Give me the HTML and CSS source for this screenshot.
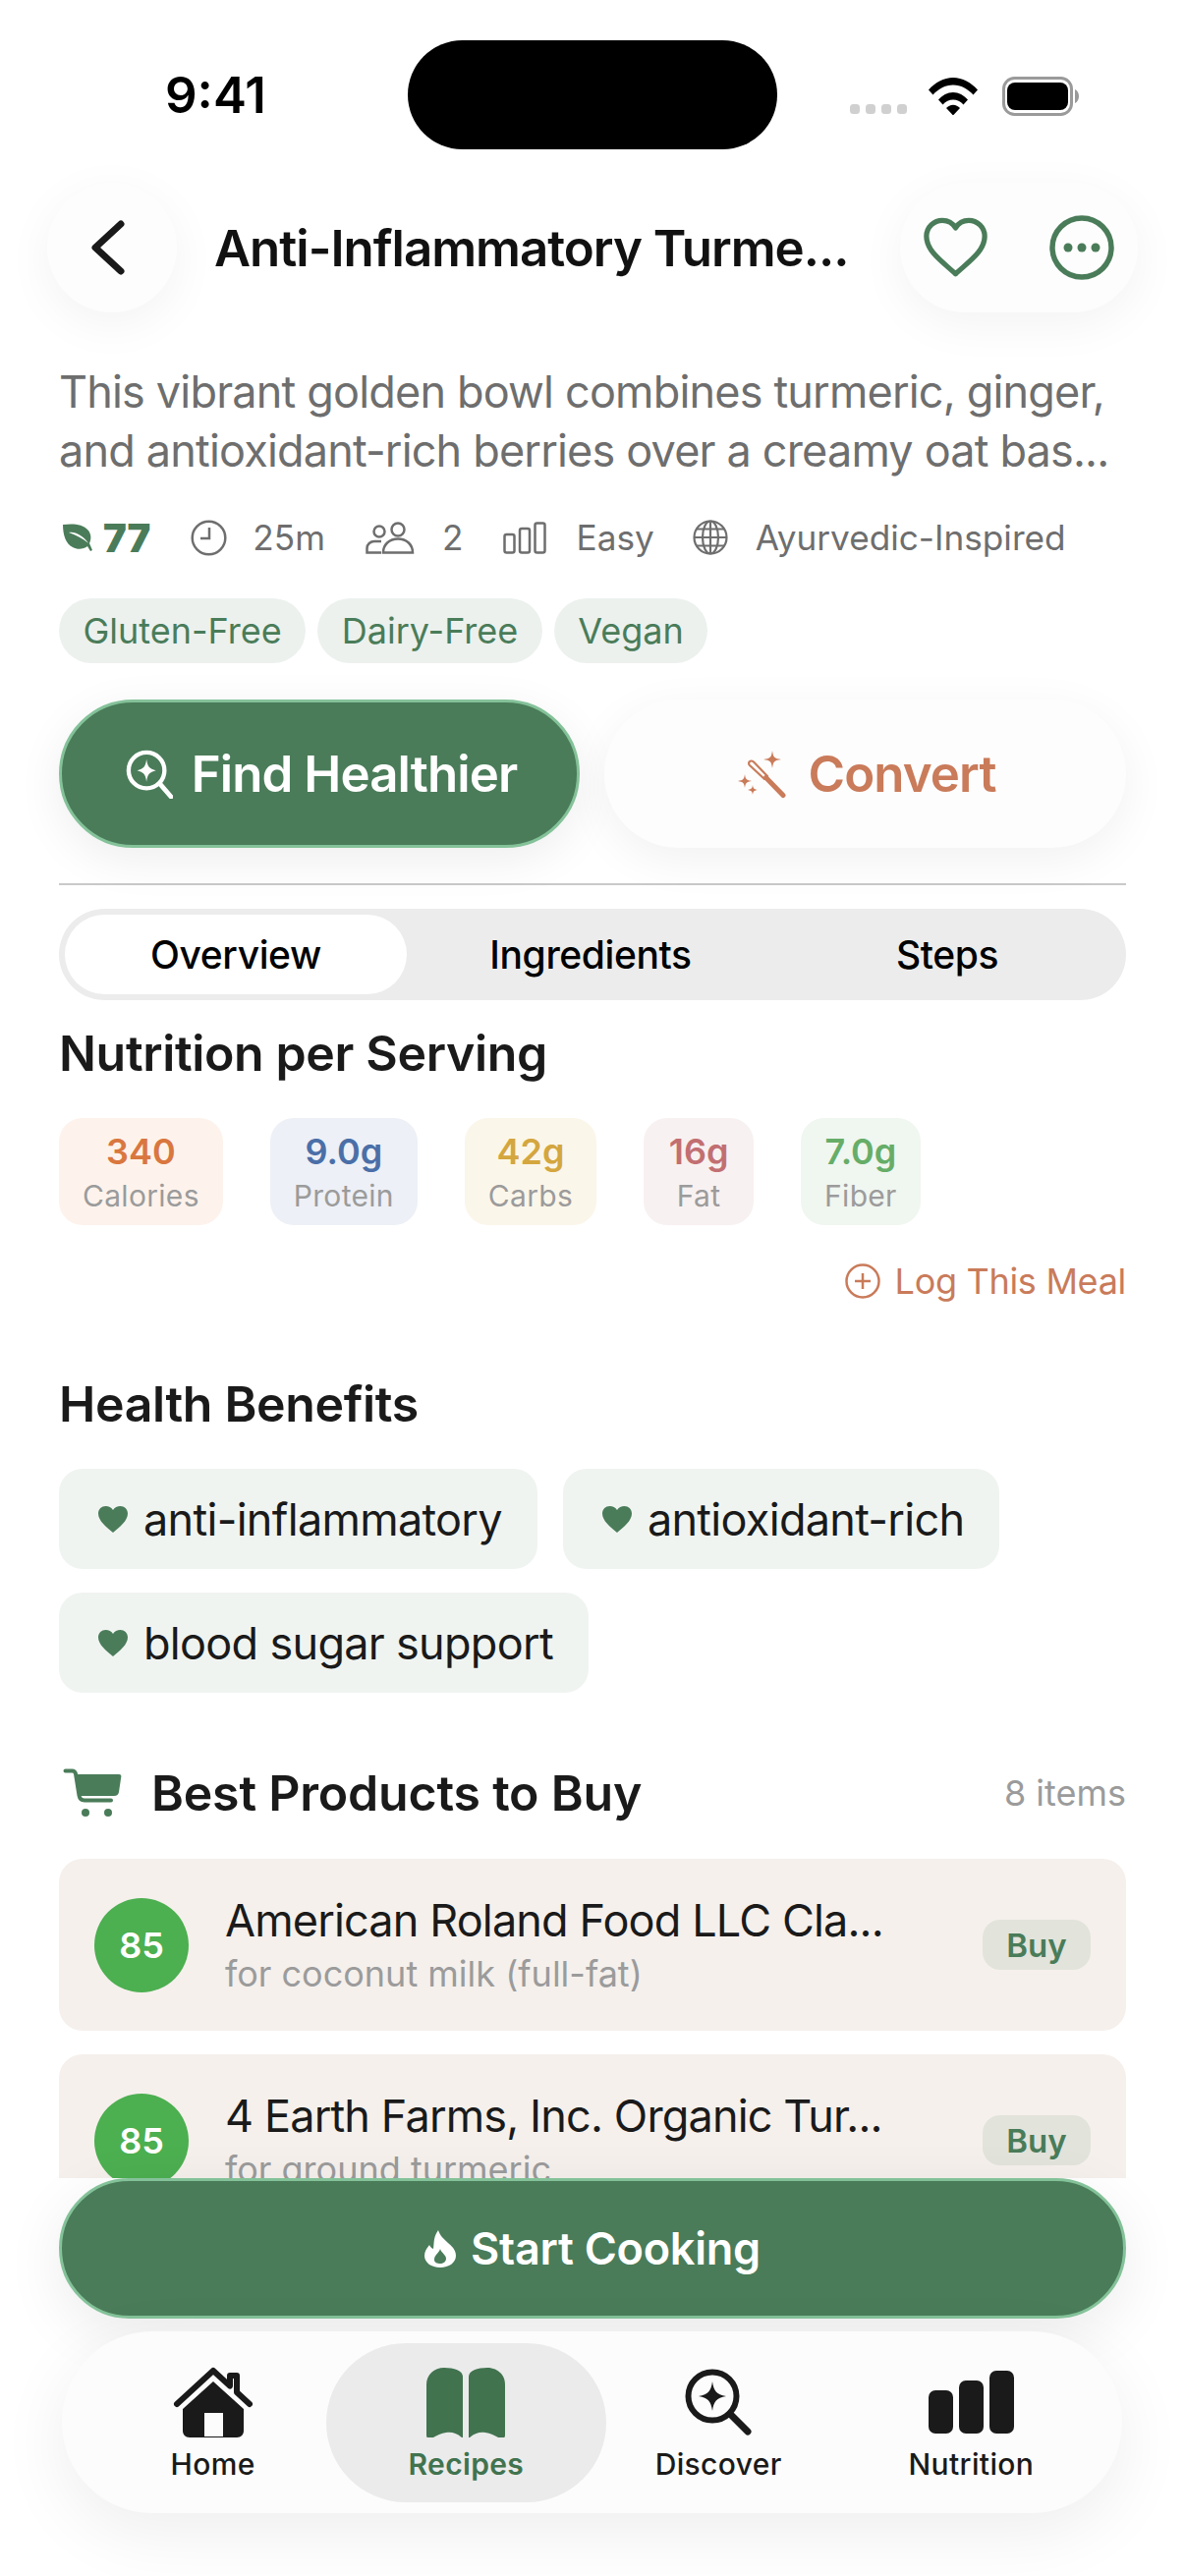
FILE: index.html
```html
<!DOCTYPE html>
<html lang="en">
<head>
<meta charset="utf-8">
<title>Recipe</title>
<link rel="stylesheet" href="styles.css">
</head>
<body>
<div class="screen">
  <div class="status">
    <span class="time">9:41</span>
    <div class="island"></div>
    <div class="status-icons">
      <svg class="signal" width="58" height="12" viewBox="0 0 58 12"><rect x="0" y="1" width="10" height="10" rx="3.5"/><rect x="16" y="1" width="10" height="10" rx="3.5"/><rect x="32" y="1" width="10" height="10" rx="3.5"/><rect x="48" y="1" width="10" height="10" rx="3.5"/></svg>
      <svg class="wifi" width="50" height="38" viewBox="0 0 50 38"><path d="M0 12.500C6.500 5 15.500 0 25 0s18.500 5 25 12.500l-4.500 5C40 11.500 33 7.500 25 7.500S10 11.500 4.500 17.500z"/><path d="M10 22.500C14 18 19.300 15 25 15s11 3 15 7.500l-4.500 5C32.500 24.300 29 22.500 25 22.500s-7.500 1.800-10.500 5z"/><path d="M18 31c1.800-2 4.300-3.300 7-3.300s5.200 1.300 7 3.300l-7 7.500z"/></svg>
      <svg class="battery" width="78" height="40" viewBox="0 0 78 40"><rect x="1.500" y="1.500" width="69" height="37" rx="11" fill="none" stroke="#9a9a9a" stroke-width="3"/><rect x="5" y="6" width="62" height="28" rx="8" fill="#000"/><path d="M74 13c2.500 1 4 4 4 7s-1.500 6-4 7z" fill="#9a9a9a"/></svg>
    </div>
  </div>

  <header class="topbar">
    <button class="circle-btn">
      <svg width="36" height="60" viewBox="0 0 36 60"><path d="M31 6 5 30l26 24" fill="none" stroke="#1a1a1a" stroke-width="7" stroke-linecap="round" stroke-linejoin="round"/></svg>
    </button>
    <h1 class="title">Anti-Inflammatory Turme...</h1>
    <div class="actions">
      <svg width="65" height="62" viewBox="0 0 68 64"><path d="M34 60C20 47 3 36 3 20 3 10 11 3 20 3c6 0 11 3 14 8 3-5 8-8 14-8 9 0 17 7 17 17 0 16-17 27-31 40z" fill="none" stroke="#4a7c59" stroke-width="5.500" stroke-linejoin="round"/></svg>
      <svg width="66" height="66" viewBox="0 0 66 66"><circle cx="33" cy="33" r="30" fill="none" stroke="#4a7c59" stroke-width="5.500"/><circle cx="19" cy="33" r="4.500" fill="#4a7c59"/><circle cx="33" cy="33" r="4.500" fill="#4a7c59"/><circle cx="47" cy="33" r="4.500" fill="#4a7c59"/></svg>
    </div>
  </header>

  <main class="scroll">
    <p class="desc">This vibrant golden bowl combines turmeric, ginger,<br>and antioxidant-rich berries over a creamy oat bas...</p>

    <div class="meta">
      <span class="score">
        <svg width="32" height="28" viewBox="0 0 32 28"><path d="M1 1c10-1 20-1 26 6 3 4 3 9 1 13l3 7-2 1-3-5c-4 3-10 4-15 1C4 21 1 11 1 1z" fill="#4a7c59"/><path d="M7 9c7-1 14 3 20 11-6-5-12-8-20-11z" fill="#fff"/></svg>
        <b>77</b>
      </span>
      <span class="meta-item m-time">
        <svg width="37" height="37" viewBox="0 0 37 37"><circle cx="18.500" cy="18.500" r="16.800" fill="none" stroke="#6e6e6e" stroke-width="2.500"/><path d="M19 8v11h-9" fill="none" stroke="#6e6e6e" stroke-width="2.500"/></svg>
        <span>25m</span>
      </span>
      <span class="meta-item m-people">
        <svg width="50" height="33" viewBox="0 0 50 33"><g fill="none" stroke="#6e6e6e" stroke-width="2.500"><circle cx="14" cy="10" r="5.500"/><circle cx="33" cy="8" r="6.500"/><path d="M16 20H9c-4 0-7.500 3-7.500 7v4.500H16"/><path d="M18 31.500h30c0-8-6-14-15-14s-15 6-15 14z"/></g></svg>
        <span>2</span>
      </span>
      <span class="meta-item m-diff">
        <svg width="44" height="33" viewBox="0 0 44 33"><g fill="none" stroke="#6e6e6e" stroke-width="2.500"><rect x="1.500" y="13" width="10" height="18.500" rx="2"/><rect x="17" y="7" width="10" height="24.500" rx="2"/><rect x="32.500" y="1.500" width="10" height="30" rx="2"/></g></svg>
        <span>Easy</span>
      </span>
      <span class="meta-item m-cuisine">
        <svg width="36" height="36" viewBox="0 0 36 36"><g fill="none" stroke="#6e6e6e" stroke-width="2.200"><circle cx="18" cy="18" r="16.500"/><ellipse cx="18" cy="18" rx="8" ry="16.500"/><path d="M18 1.500v33M1.500 18h33M4 9.500h28M4 26.500h28"/></g></svg>
        <span>Ayurvedic-Inspired</span>
      </span>
    </div>

    <div class="tags">
      <span class="tag">Gluten-Free</span>
      <span class="tag">Dairy-Free</span>
      <span class="tag">Vegan</span>
    </div>

    <div class="cta-row">
      <button class="cta cta-green">
        <svg width="48" height="50" viewBox="0 0 50 52"><circle cx="22" cy="22" r="19" fill="none" stroke="#fff" stroke-width="4.500"/><path d="M36 36l12 14" stroke="#fff" stroke-width="5" stroke-linecap="round"/><path d="M22 10c1 8 3 10 10 12-7 2-9 4-10 12-1-8-3-10-10-12 7-2 9-4 10-12z" fill="#fff"/></svg>
        Find Healthier
      </button>
      <button class="cta cta-white">
        <svg width="52" height="50" viewBox="0 0 52 50"><g fill="#c97b5a"><path d="M35 1c1 7 2 8 9 9-7 1-8 2-9 9-1-7-2-8-9-9 7-1 8-2 9-9z"/><path d="M7 25c.7 5 1.500 6 7 7-5.500 1-6.300 2-7 7-.7-5-1.500-6-7-7 5.500-1 6.300-2 7-7z"/><path d="M15 36c.5 3.500 1 4 5 5-4 1-4.500 1.500-5 5-.5-3.500-1-4-5-5 4-1 4.500-1.500 5-5z"/></g><path d="M11.500 12.500c1.500-1.500 3.500-1 4.500 0L30 27l-3 3-15-14c-1-1-1-2.500-.5-3.500z" fill="none" stroke="#c97b5a" stroke-width="2.200" stroke-linejoin="round"/><path d="M28.500 28.500 46 46.500" fill="none" stroke="#c97b5a" stroke-width="5" stroke-linecap="round"/></svg>
        Convert
      </button>
    </div>

    <hr class="divider">

    <nav class="tabs">
      <span class="tab tab-on">Overview</span>
      <span class="tab">Ingredients</span>
      <span class="tab">Steps</span>
    </nav>

    <h2 class="section-title">Nutrition per Serving</h2>
    <div class="facts">
      <div class="fact f-cal"><strong>340</strong><small>Calories</small></div>
      <div class="fact f-pro"><strong>9.0g</strong><small>Protein</small></div>
      <div class="fact f-car"><strong>42g</strong><small>Carbs</small></div>
      <div class="fact f-fat"><strong>16g</strong><small>Fat</small></div>
      <div class="fact f-fib"><strong>7.0g</strong><small>Fiber</small></div>
    </div>

    <div class="log">
      <svg width="36" height="36" viewBox="0 0 36 36"><circle cx="18" cy="18" r="16.500" fill="none" stroke="#c97b5a" stroke-width="2.500"/><path d="M18 10v16M10 18h16" stroke="#c97b5a" stroke-width="2.500"/></svg>
      <span>Log This Meal</span>
    </div>

    <h2 class="section-title benefits-title">Health Benefits</h2>
    <div class="benefits">
      <span class="benefit"><svg class="heart" width="30" height="27" viewBox="0 0 30 27"><path d="M15 27C8 21 0 15 0 7.500 0 3 3.500 0 7.500 0 10.500 0 13.500 1.500 15 4c1.500-2.500 4.500-4 7.500-4C26.500 0 30 3 30 7.500 30 15 22 21 15 27z"/></svg>anti-inflammatory</span>
      <span class="benefit"><svg class="heart" width="30" height="27" viewBox="0 0 30 27"><path d="M15 27C8 21 0 15 0 7.500 0 3 3.500 0 7.500 0 10.500 0 13.500 1.500 15 4c1.500-2.500 4.500-4 7.500-4C26.500 0 30 3 30 7.500 30 15 22 21 15 27z"/></svg>antioxidant-rich</span>
      <span class="benefit"><svg class="heart" width="30" height="27" viewBox="0 0 30 27"><path d="M15 27C8 21 0 15 0 7.500 0 3 3.500 0 7.500 0 10.500 0 13.500 1.500 15 4c1.500-2.500 4.500-4 7.500-4C26.500 0 30 3 30 7.500 30 15 22 21 15 27z"/></svg>blood sugar support</span>
    </div>

    <div class="products-head">
      <svg width="60" height="50" viewBox="0 0 60 50"><path d="M2.500 2.500h7c2 0 3 1 3.500 3l3.500 22c.5 3 2 5 5.500 5H49" fill="none" stroke="#4a7c59" stroke-width="4" stroke-linecap="round" stroke-linejoin="round"/><path d="M13 6h44c2 0 2.500 1 2.300 2.500L57 24c-.5 2.500-2 4-5 4H16z" fill="#4a7c59"/><circle cx="23" cy="45" r="4" fill="#4a7c59"/><circle cx="46" cy="45" r="4" fill="#4a7c59"/></svg>
      <h2 class="section-title products-title">Best Products to Buy</h2>
      <span class="count">8 items</span>
    </div>

    <div class="products">
      <div class="product">
        <span class="rating">85</span>
        <div class="product-info">
          <div class="product-name">American Roland Food LLC Cla...</div>
          <div class="product-for">for coconut milk (full-fat)</div>
        </div>
        <span class="buy">Buy</span>
      </div>
      <div class="product">
        <span class="rating">85</span>
        <div class="product-info">
          <div class="product-name">4 Earth Farms, Inc. Organic Tur...</div>
          <div class="product-for">for ground turmeric</div>
        </div>
        <span class="buy">Buy</span>
      </div>
    </div>
  </main>

  <div class="dock">
    <button class="start">
      <svg width="32" height="38" viewBox="0 0 32 38"><path fill-rule="evenodd" d="M14 0c2 6 5 8 10 13 5 4 8 8 8 13 0 7-7 12-16 12S0 33 0 26c0-5 3-8 5-11 1 2 2 3 4 4 1-7 0-12 5-19zM16 19c-1 4-6 6-6 11 0 3 3 4 6 4s6-2 6-5c0-4-5-6-6-10z" fill="#fff"/></svg>
      Start Cooking
    </button>
    <nav class="bottom-nav">
      <a class="nav-item">
        <svg class="nav-icon" width="82" height="72" viewBox="0 0 82 72"><path d="M4 38 41 4l17 15.600V9h7v17l13 12" fill="none" stroke="#1a1a1a" stroke-width="6" stroke-linecap="round" stroke-linejoin="round"/><path fill-rule="evenodd" d="M41 15 72 43v22c0 4-2.500 7-7 7H17c-4.500 0-7-3-7-7V43zM32 47v24h19V47z" fill="#1a1a1a"/></svg>
        <span class="nav-label">Home</span>
      </a>
      <a class="nav-item nav-on">
        <svg class="nav-icon" width="80" height="72" viewBox="0 0 80 72"><path d="M37 10v63c-6-6-12-7-17-6-6 1-11 4-15 6-3 1-5-1-5-3V18C0 8 8 1 18 1s19 3 19 9z" fill="#41734f"/><path d="M43 10v63c6-6 12-7 17-6 6 1 11 4 15 6 3 1 5-1 5-3V18C80 8 72 1 62 1S43 4 43 10z" fill="#41734f"/></svg>
        <span class="nav-label">Recipes</span>
      </a>
      <a class="nav-item">
        <svg class="nav-icon" width="68" height="68" viewBox="0 0 68 68"><circle cx="28" cy="28" r="24.500" fill="none" stroke="#1a1a1a" stroke-width="6"/><path d="M46 46l18 18" stroke="#1a1a1a" stroke-width="7" stroke-linecap="round"/><path d="M28 13c1.500 10 4 13 14 15-10 2-12.500 5-14 15-1.500-10-4-13-14-15 10-2 12.500-5 14-15z" fill="#1a1a1a"/></svg>
        <span class="nav-label">Discover</span>
      </a>
      <a class="nav-item">
        <svg class="nav-icon" width="87" height="64" viewBox="0 0 87 64"><g fill="#1a1a1a"><rect x="0" y="20" width="25" height="44" rx="7"/><rect x="31" y="10" width="25" height="54" rx="7"/><rect x="62" y="0" width="25" height="64" rx="7"/></g></svg>
        <span class="nav-label">Nutrition</span>
      </a>
    </nav>
  </div>
</div>
</body>
</html>
```

FILE: styles.css
```css
* { box-sizing: border-box; margin: 0; padding: 0; }
html, body { width: 1206px; height: 2622px; background: #fff; overflow: hidden; }
body { font-family: Inter, "Liberation Sans", sans-serif; color: #1a1a1a; }
button { font-family: inherit; border: 0; background: none; }

.screen { position: relative; width: 1206px; height: 2622px; overflow: hidden; display: flex; flex-direction: column; background: #fff; }

.status { height: 186px; flex: none; display: flex; align-items: flex-start; position: relative; }
.time { position: absolute; left: 168px; top: 67px; font-size: 51px; line-height: 60px; font-weight: 600; color: #000; }
.island { position: absolute; left: 415px; top: 41px; width: 376px; height: 111px; border-radius: 56px; background: #000; }
.status-icons { position: absolute; left: 865px; top: 78px; display: flex; align-items: flex-start; }
.signal { fill: #d0d0d0; margin-top: 27px; }
.wifi { fill: #000; margin-left: 22px; margin-top: 1px; }
.battery { margin-left: 25px; }

.topbar { height: 132px; flex: none; display: flex; align-items: center; padding: 0 48px; }
.circle-btn { width: 132px; height: 132px; border-radius: 66px; background: #fdfdfd; box-shadow: 0 12px 48px rgba(0,0,0,.05); display: flex; align-items: center; justify-content: center; padding-right: 8px; flex: none; }
.title { margin: 2px 0 0 38px; font-size: 51px; line-height: 60px; font-weight: 600; letter-spacing: -1px; color: #111; white-space: nowrap; flex: 1; }
.actions { width: 242px; height: 132px; border-radius: 66px; background: #fdfdfd; box-shadow: 0 12px 48px rgba(0,0,0,.05); display: flex; align-items: center; justify-content: space-between; padding: 0 24px 0 24px; flex: none; }

.scroll { height: 1899px; flex: none; overflow: hidden; padding: 0 60px; }

.desc { margin-top: 51px; font-size: 45px; line-height: 60px; letter-spacing: -0.82px; color: #6e6e6e; white-space: nowrap; }

.meta { margin-top: 40px; height: 36px; display: flex; align-items: center; color: #6e6e6e; font-size: 35.200px; white-space: nowrap; }
.meta-item { display: flex; align-items: center; }
.score { display: flex; align-items: center; gap: 10px; margin-left: 3px; color: #4a7c59; font-size: 40px; font-weight: 700; }
.m-time { margin-left: 41px; gap: 26px; }
.m-people { margin-left: 41px; gap: 28px; }
.m-diff { margin-left: 40px; gap: 31px; }
.m-cuisine { margin-left: 39px; gap: 28px; }

.tags { margin-top: 44px; display: flex; gap: 12px; }
.tag { height: 66px; padding: 0 24.500px; border-radius: 33px; background: #ecf1ee; color: #4a7c59; font-size: 36px; line-height: 66px; }

.cta-row { margin-top: 37px; display: flex; justify-content: space-between; }
.cta { height: 151px; width: 530px; padding-left: 4px; border-radius: 76px; font-size: 51px; font-weight: 600; letter-spacing: -0.9px; display: flex; align-items: center; justify-content: center; gap: 19px; }
.cta-green { background: #4a7c59; color: #fff; border: 3px solid #84c299; box-shadow: 0 12px 48px rgba(0,0,0,.07); }
.cta-white { width: 531px; background: #fdfdfd; color: #c97b5a; box-shadow: 0 12px 48px rgba(0,0,0,.06); }

.divider { margin-top: 36px; border: 0; height: 2px; background: #c9c9c9; }

.tabs { margin-top: 24px; height: 93px; border-radius: 47px; background: #ececec; padding: 6px; display: grid; grid-template-columns: 348px 374px 1fr; }
.tab { display: flex; align-items: center; justify-content: center; font-size: 39px; font-weight: 500; letter-spacing: -0.4px; color: #000; border-radius: 41px; }
.tab-on { background: #fff; }

.section-title { margin-top: 24px; font-size: 50px; line-height: 60px; font-weight: 600; letter-spacing: -0.35px; color: #1a1a1a; }

.facts { margin-top: 36px; display: flex; }
.fact { height: 109px; border-radius: 24px; display: flex; flex-direction: column; align-items: center; padding: 12px 24px 0; margin-right: 48px; }
.fact strong { font-size: 36px; line-height: 44px; font-weight: 600; }
.fact small { margin-top: 4px; font-size: 30px; line-height: 38px; letter-spacing: .3px; color: #9b9b9b; }
.f-cal { background: #fdf3ec; } .f-cal strong { color: #d9773f; }
.f-pro { background: #edf0f6; } .f-pro strong { color: #4a6fa8; }
.f-car { background: #fbf6ea; } .f-car strong { color: #d4a63f; }
.f-fat { background: #f8f1f1; min-width: 112px; } .f-fat strong { color: #c26f72; }
.f-fib { background: #f0f6f0; } .f-fib strong { color: #66ad68; }

.log { margin-top: 37px; height: 40px; display: flex; align-items: center; justify-content: flex-end; gap: 15px; color: #c97b5a; font-size: 36px; letter-spacing: -0.3px; }

.benefits-title { margin-top: 75px; }
.benefits { margin-top: 36px; display: flex; flex-wrap: wrap; gap: 24px 26px; }
.benefit { height: 102px; padding: 0 36px 0 40px; border-radius: 24px; background: #f0f4f1; display: flex; align-items: center; gap: 16px; font-size: 45px; letter-spacing: -0.7px; color: #1a1a1a; }
.heart { fill: #4a7c59; }

.products-head { margin-top: 72px; height: 60px; display: flex; align-items: center; }
.products-head svg { margin-left: 4px; }
.products-title { margin: 0 0 0 30px; flex: 1; letter-spacing: -0.2px; }
.count { font-size: 36px; color: #9b9b9b; }

.products { margin-top: 37px; display: flex; flex-direction: column; gap: 24px; }
.product { height: 175px; flex: none; border-radius: 24px; background: #f5f0ec; display: flex; align-items: center; padding: 0 36px; }
.rating { width: 96px; height: 96px; border-radius: 50%; background: #4caf50; color: #fff; font-size: 36px; font-weight: 600; display: flex; align-items: center; justify-content: center; flex: none; }
.product-info { margin-left: 37px; flex: 1; }
.product-name { font-size: 45px; line-height: 54px; letter-spacing: -0.85px; color: #1a1a1a; white-space: nowrap; }
.product-for { margin-top: 5px; font-size: 36px; line-height: 44px; color: #9b9b9b; white-space: nowrap; }
.buy { width: 110px; height: 51px; border-radius: 18px; background: #e2e3db; color: #4a7c59; font-size: 33px; font-weight: 600; display: flex; align-items: center; justify-content: center; flex: none; }

.dock { position: absolute; left: 0; right: 0; top: 2217px; height: 405px; padding: 0 60px; }
.start { width: 1086px; height: 143px; border-radius: 72px; background: #4a7c59; border: 3px solid #84c299; color: #fff; font-size: 45px; font-weight: 600; letter-spacing: -0.25px; display: flex; align-items: center; justify-content: center; gap: 15px; box-shadow: 0 16px 60px rgba(0,0,0,.08); }
.bottom-nav { margin: 13px 4px 0 3px; height: 185px; border-radius: 92px; background: #fcfcfc; box-shadow: 0 20px 70px rgba(0,0,0,.07); padding: 0 25px; display: grid; grid-template-columns: repeat(4, 1fr); align-items: center; }
.nav-item { height: 162px; border-radius: 81px; display: flex; flex-direction: column; align-items: center; }
.nav-icon { height: 72px; margin-top: 24px; flex: none; }
.nav-label { margin-top: 9px; font-size: 30px; line-height: 36px; font-weight: 500; letter-spacing: .35px; color: #1a1a1a; }
.nav-on { background: #ebebeb; margin: 0 -14px 0 -13px; }
.nav-on .nav-label { color: #41734f; font-weight: 600; }
```
